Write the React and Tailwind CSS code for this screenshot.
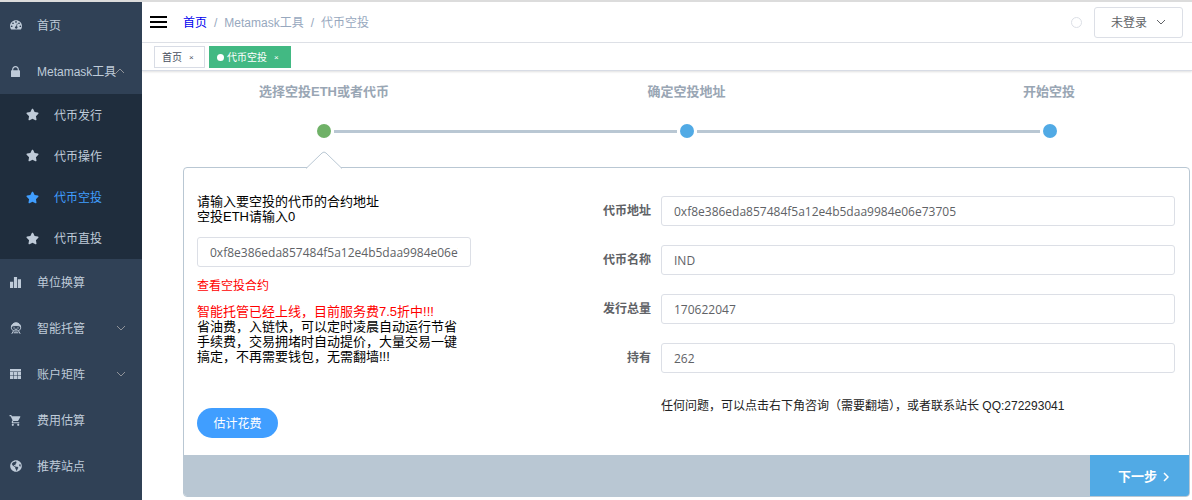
import React from "react";
import { FaStar, FaGlobeAmericas } from "react-icons/fa";
import { MdShoppingCart } from "react-icons/md";

const DashboardIcon = () => (
  <svg viewBox="0 0 128 128" className="size-3" fill="currentColor" fillRule="evenodd">
    <path d="M64 12C28.700 12 0 40 0 75c0 13 3.500 24 10 34 1.500 2 3.500 3 6 3h96c2.500 0 4.500-1 6-3 6.500-10 10-21 10-34C128 40 99.300 12 64 12zM18 68a9 9 0 1 1 0 18 9 9 0 0 1 0-18zM32 36a9 9 0 1 1 0 18 9 9 0 0 1 0-18zM64 22a9 9 0 1 1 0 18 9 9 0 0 1 0-18zM96 36a9 9 0 1 1 0 18 9 9 0 0 1 0-18zM110 68a9 9 0 1 1 0 18 9 9 0 0 1 0-18zM74 48l7 2-8 28c6 3 9 9 7 15-2 8-9 12-17 10-8-2-12-9-10-17 2-6 7-10 13-10z" />
  </svg>
);

const LockIcon = () => (
  <svg viewBox="0 0 128 128" className="h-[11px] w-[9px]" preserveAspectRatio="none" fill="currentColor">
    <path d="M119.88 49.674h-7.987V39.52C111.893 17.738 90.45.08 63.996.08 37.543.08 16.1 17.738 16.1 39.52v10.154H8.113c-4.408 0-7.987 2.94-7.987 6.577v65.13c0 3.637 3.57 6.577 7.987 6.577H119.88c4.407 0 7.987-2.94 7.987-6.577v-65.13c-.008-3.636-3.58-6.577-7.987-6.577zm-23.953 0H32.065V39.52c0-14.524 14.301-26.295 31.931-26.295 17.63 0 31.932 11.777 31.932 26.295v10.153z" />
  </svg>
);

const ChartIcon = () => (
  <svg viewBox="0 0 128 128" className="size-[11px]" fill="currentColor">
    <path d="M0 54.857h36.571V128H0V54.857zM91.429 27.429H128V128H91.429V27.429zM45.714 0h36.572v128H45.714V0z" />
  </svg>
);

const FaceIcon = () => (
  <svg viewBox="0 0 24 24" className="size-3" fill="none" stroke="currentColor" strokeWidth="2" strokeLinecap="round">
    <path d="M3 8.500C4 4 7.500 1.500 12 1.500S20 4 21 8.500c-5.500-2-12.500-2-18 0z" fill="currentColor" />
    <path d="M3 8.500c-2 6.500 2.500 9.500 9 9.500s11-3 9-9.500M6.500 18.500L4 23M17.500 18.500L20 23M8 21.500h8M10 14.500h4" />
    <path d="M8 11.800h.1M16 11.800h.1" strokeWidth="2.600" />
  </svg>
);

const TableIcon = () => (
  <svg viewBox="0 0 128 128" className="h-[10px] w-[11px]" preserveAspectRatio="none" fill="currentColor">
    <path d="M.006.064h127.988v31.104H.006V.064zm0 38.016h38.396v41.472H.006V38.08zm0 48.384h38.396v41.472H.006V86.464zM44.802 38.08h38.396v41.472H44.802V38.08zm0 48.384h38.396v41.472H44.802V86.464zM89.598 38.08h38.396v41.472H89.598zm0 48.384h38.396v41.472H89.598z" />
  </svg>
);

const Chevron = ({ className, d = "M1 1l4 4 4-4" }) => (
  <svg viewBox="0 0 10 6" className={className} fill="none" stroke="currentColor">
    <path d={d} />
  </svg>
);

function MenuItem({ icon, label, arrow }) {
  return (
    <li>
      <a href="#" className="flex h-[46px] items-center pr-4 pl-[9px] whitespace-nowrap">
        <span className="mr-[15px] flex w-[13px] justify-center">{icon}</span>
        <span className="pt-[2px]">{label}</span>
        {arrow === "up" && <Chevron className="-ml-px h-[6px] w-[10px] shrink-0 text-[#909399]" d="M1 5l4-4 4 4" />}
        {arrow === "down" && <Chevron className="ml-auto h-[6px] w-[10px] shrink-0 text-[#909399]" />}
      </a>
    </li>
  );
}

const subItems = ["代币发行", "代币操作", "代币空投", "代币直投"];

function Sidebar() {
  return (
    <nav className="w-[142px] shrink-0 bg-[#304156] text-[#bfcbd9]">
      <ul>
        <MenuItem icon={<DashboardIcon />} label="首页" />
        <MenuItem icon={<LockIcon />} label="Metamask工具" arrow="up" />
        <li className="bg-[#1f2d3d]">
          <ul className="grid h-[165px] grid-rows-4">
            {subItems.map((s) => (
              <li key={s} className="flex">
                <a
                  href="#"
                  className={
                    s === "代币空投"
                      ? "flex flex-1 items-center gap-[15px] pl-[26px] text-[#409eff]"
                      : "flex flex-1 items-center gap-[15px] pl-[26px]"
                  }
                >
                  <FaStar className="size-[13px]" />
                  <span className="pt-[2px]">{s}</span>
                </a>
              </li>
            ))}
          </ul>
        </li>
        <MenuItem icon={<ChartIcon />} label="单位换算" />
        <MenuItem icon={<FaceIcon />} label="智能托管" arrow="down" />
        <MenuItem icon={<TableIcon />} label="账户矩阵" arrow="down" />
        <MenuItem icon={<MdShoppingCart className="size-[13px]" />} label="费用估算" />
        <MenuItem icon={<FaGlobeAmericas className="size-3" />} label="推荐站点" />
      </ul>
    </nav>
  );
}

function Header() {
  return (
    <header className="flex h-[41px] items-center border-b border-[#dfe2e8] pr-[9px] pl-2">
      <button aria-label="菜单" className="flex w-[17px] flex-col gap-[3px]">
        <span className="h-[2px] bg-black" />
        <span className="h-[2px] bg-black" />
        <span className="h-[2px] bg-black" />
      </button>
      <div className="ml-4 flex gap-[7px] pt-[2px] text-[#97a8be]">
        <a href="#" className="text-[#0000ee]">首页</a>
        <span>/</span>
        <a href="#">Metamask工具</a>
        <span>/</span>
        <span>代币空投</span>
      </div>
      <span className="mr-3 ml-auto size-[11px] rounded-full border border-[#dcdfe6]" />
      <button className="flex h-[31px] w-[89px] items-center justify-center gap-[9px] rounded-[3px] border border-[#dcdfe6] text-[#606266]">
        <span className="pt-[2px]">未登录</span>
        <Chevron className="h-[6px] w-[10px]" />
      </button>
    </header>
  );
}

function Tags() {
  return (
    <div className="flex h-7 items-center gap-1 border-b border-[#d8dce5] pl-3 text-[10px] shadow-[0_1px_2px_0_rgba(0,0,0,0.12)]">
      <a href="#" className="flex h-[22px] w-[51px] items-center gap-[7px] border border-[#d8dce5] pt-[2px] pl-[7px] text-[#495060]">
        首页 <span className="text-[8px]">×</span>
      </a>
      <a href="#" className="flex h-[22px] w-[82px] items-center border border-[#42b983] bg-[#42b983] pt-[2px] pl-[7px] text-white">
        <span className="mr-[3px] size-[7px] rounded-full bg-white" />
        代币空投
        <span className="ml-[7px] text-[8px]">×</span>
      </a>
    </div>
  );
}

function Steps() {
  return (
    <div className="text-[13px] leading-5 font-bold text-[#99a6b4]">
      <ol className="flex justify-between px-[71px]">
        <li className="w-[140px] text-center">选择空投ETH或者代币</li>
        <li className="w-[140px] text-center">确定空投地址</li>
        <li className="w-[140px] text-center">开始空投</li>
      </ol>
      <div className="mt-[22px] flex items-center gap-[3px] pr-[133px] pl-[134px]">
        <span className="size-[14px] rounded-full bg-[#6fb167]" />
        <span className="h-[3px] flex-1 bg-[#b9c7d3]" />
        <span className="size-[14px] rounded-full bg-[#51aae5]" />
        <span className="h-[3px] flex-1 bg-[#b9c7d3]" />
        <span className="size-[14px] rounded-full bg-[#51aae5]" />
      </div>
    </div>
  );
}

const inputClass =
  "h-[30px] w-full min-w-0 rounded-[3px] border border-[#dcdfe6] bg-white px-3 font-['Open_Sans','Noto_Sans_CJK_SC',sans-serif] text-[12px] text-[#606266] outline-none";

const fields = [
  { id: "addr", label: "代币地址", value: "0xf8e386eda857484f5a12e4b5daa9984e06e73705" },
  { id: "name", label: "代币名称", value: "IND" },
  { id: "total", label: "发行总量", value: "170622047" },
  { id: "own", label: "持有", value: "262" },
];

function Panel() {
  return (
    <section className="relative mt-[29px] rounded-[4px] border border-[#b9c7d3]">
      <svg viewBox="0 0 38 18" className="absolute -top-[17px] left-[121px] h-[18px] w-[38px]">
        <path d="M1 17.500L17 2q2-2 4 0L37 17.500" fill="#fff" stroke="#b9c7d3" />
        <path d="M2.500 17.500h33" stroke="#fff" />
      </svg>
      <div className="flex h-[287px] pr-[14px] pl-[13px]">
        <div className="w-[274px] shrink-0 pt-[26px] text-[13px] leading-[15px] text-black">
          <label htmlFor="contract" className="block">
            请输入要空投的代币的合约地址
            <br />
            空投ETH请输入0
          </label>
          <input id="contract" className={inputClass + " mt-[13px]"} defaultValue="0xf8e386eda857484f5a12e4b5daa9984e06e73705" />
          <a href="#" className="mt-3 block text-[12px] text-[#ff0000]">查看空投合约</a>
          <p className="mt-[10px] text-[#ff0000]">智能托管已经上线，目前服务费7.5折中!!!</p>
          <p className="w-[266px]">省油费，入链快，可以定时凌晨自动运行节省手续费，交易拥堵时自动提价，大量交易一键搞定，不再需要钱包，无需翻墙!!!</p>
          <button className="mt-11 h-[30px] w-[81px] rounded-full bg-[#409eff] pt-[2px] text-[12px] text-white">估计花费</button>
        </div>
        <div className="min-w-0 flex-1 pt-7">
          <div className="flex flex-col gap-[19px]">
            {fields.map((f) => (
              <div key={f.id} className="flex items-center">
                <label htmlFor={f.id} className="w-[190px] shrink-0 pr-[10px] text-right font-bold text-[#606266]">
                  {f.label}
                </label>
                <input id={f.id} className={inputClass} defaultValue={f.value} />
              </div>
            ))}
          </div>
          <p className="mt-6 pl-[190px] text-[12px] leading-[18px] text-[#222222]">
            任何问题，可以点击右下角咨询（需要翻墙），或者联系站长 QQ:272293041
          </p>
        </div>
      </div>
      <footer className="flex h-[41px] justify-end rounded-b-[3px] bg-[#b9c7d3]">
        <button className="flex w-[99px] items-center justify-center gap-[6px] rounded-br-[3px] bg-[#51aae5] pt-[2px] pl-[8px] text-[13px] font-bold text-white">
          下一步
          <svg viewBox="0 0 6 10" className="h-[10px] w-[6px]" fill="none" stroke="currentColor" strokeWidth="1.500">
            <path d="M1 1l4 4-4 4" />
          </svg>
        </button>
      </footer>
    </section>
  );
}

export default function App() {
  return (
    <div className="flex min-h-screen flex-col border-t-2 border-[#dcdcdc] bg-white font-['Liberation_Sans','Noto_Sans_CJK_SC',sans-serif] text-[12px] leading-4">
      <div className="flex flex-1">
        <Sidebar />
        <div className="min-w-0 flex-1">
          <Header />
          <Tags />
          <main className="pt-[11px] pr-[2px] pl-[41px]">
            <Steps />
            <Panel />
          </main>
        </div>
      </div>
    </div>
  );
}
